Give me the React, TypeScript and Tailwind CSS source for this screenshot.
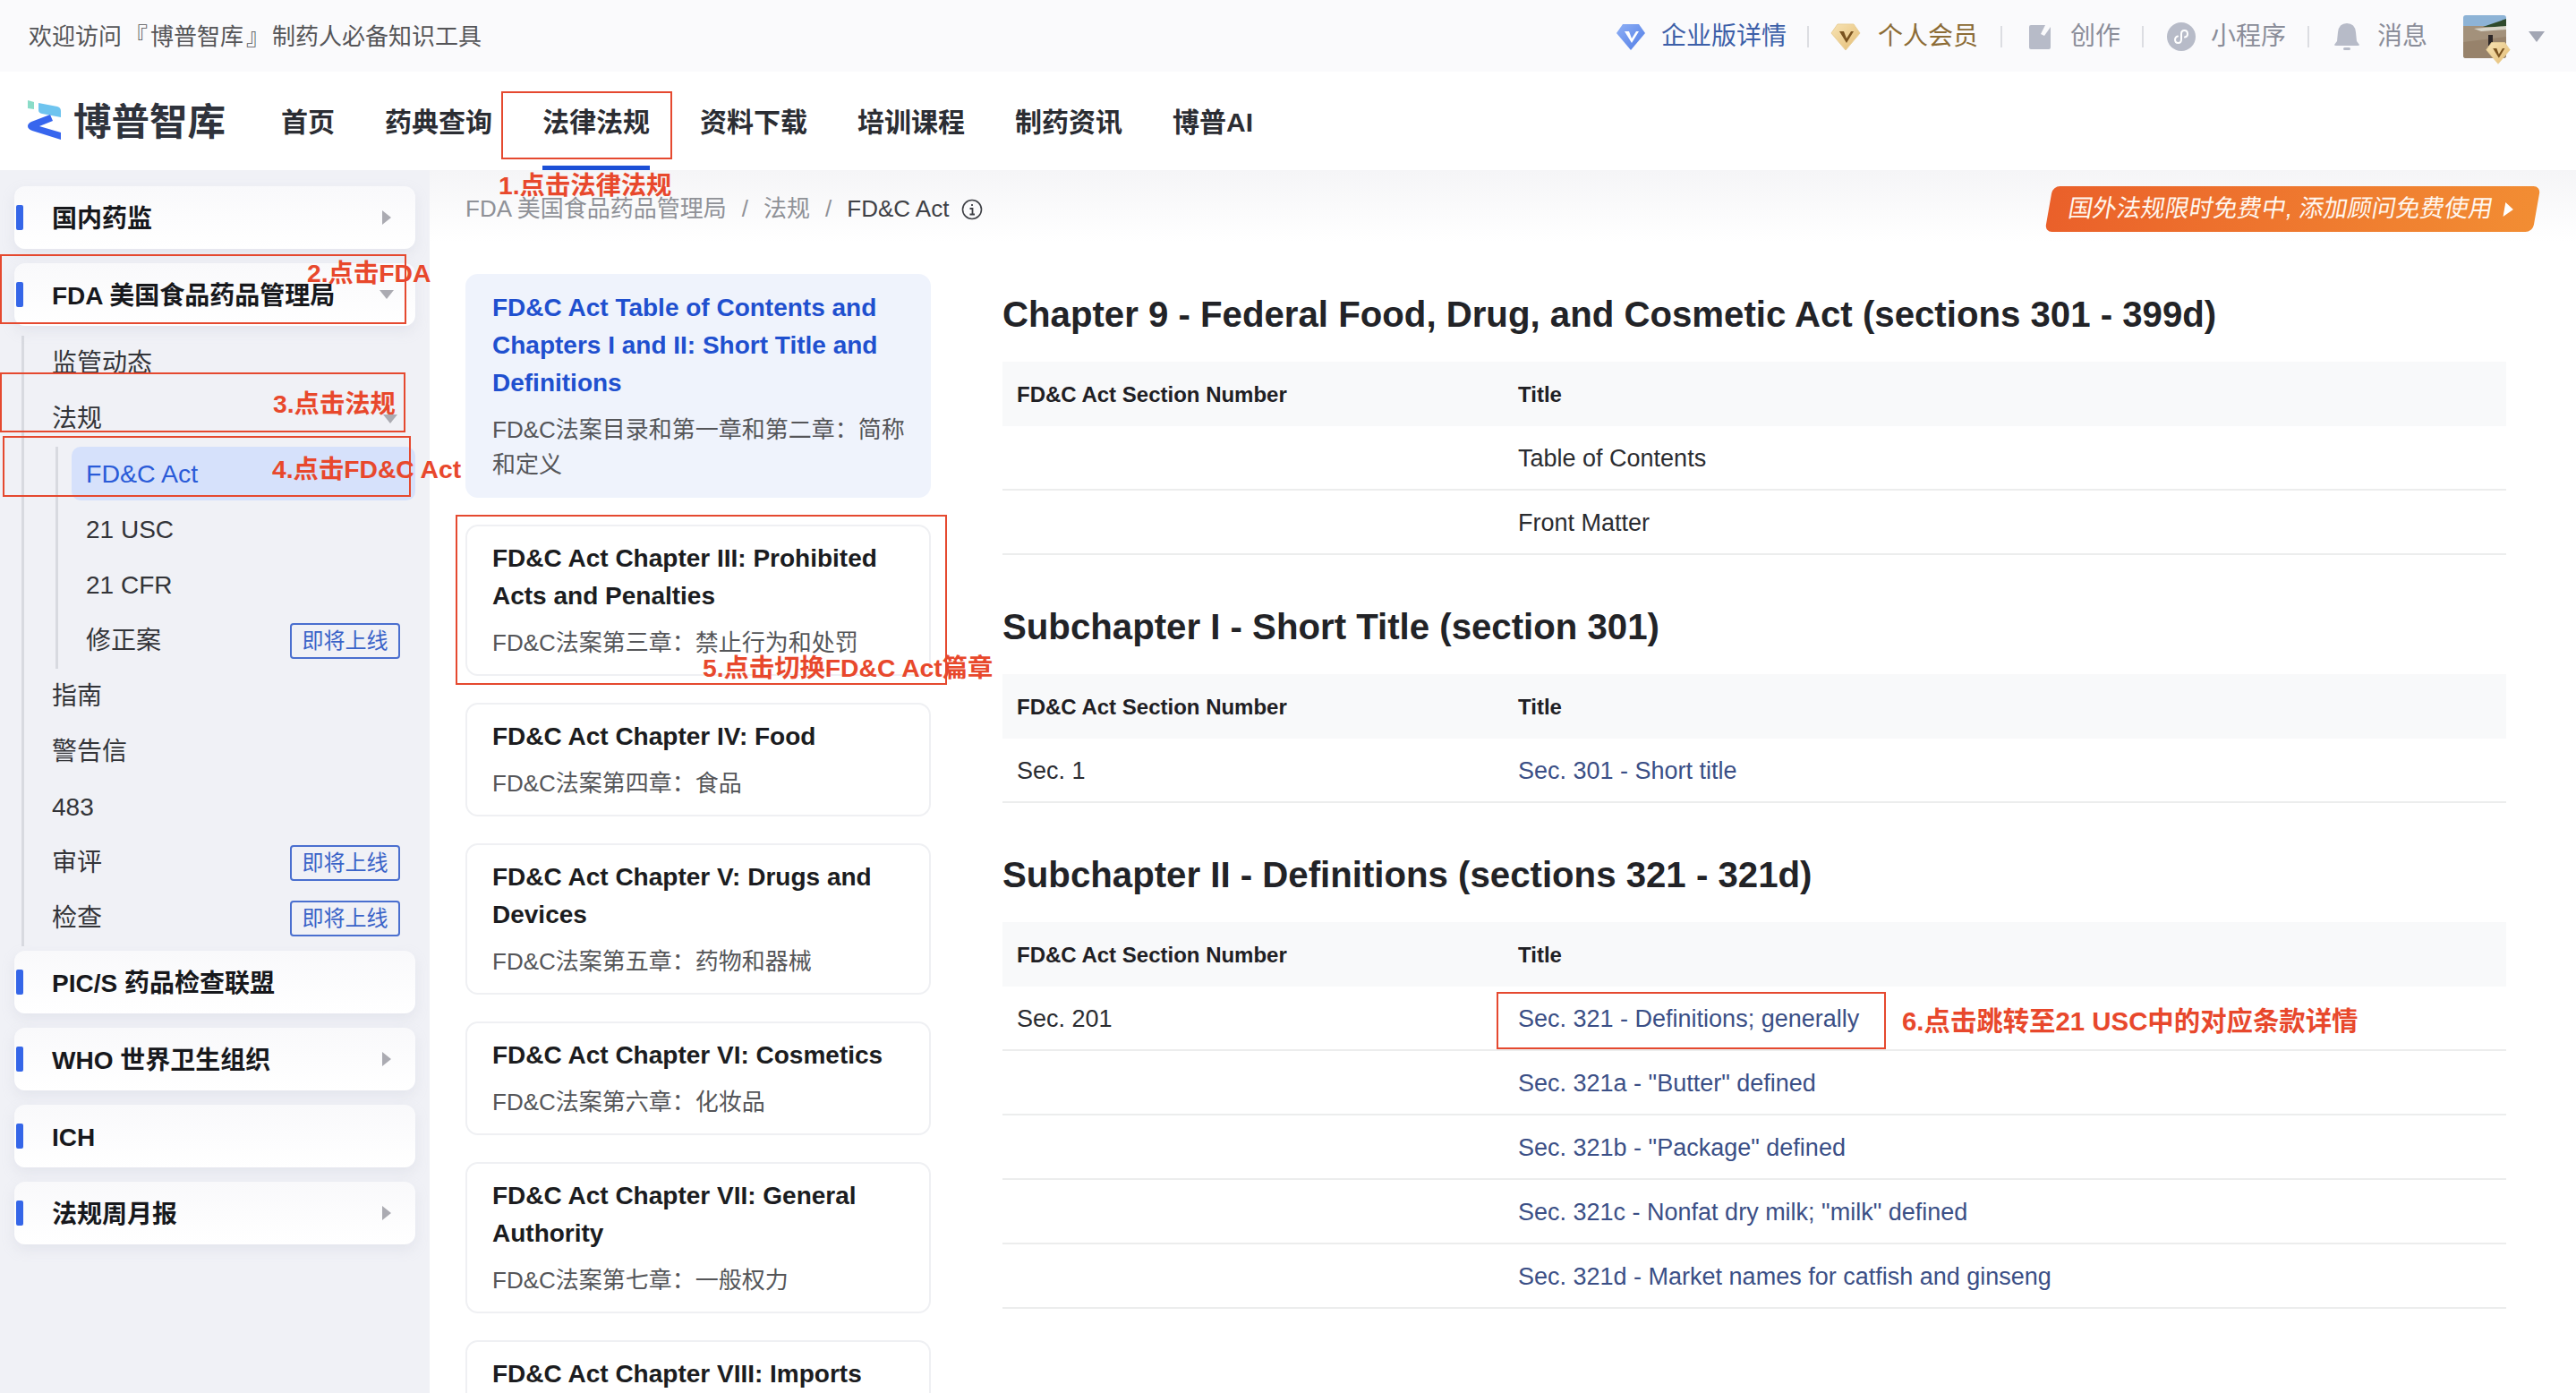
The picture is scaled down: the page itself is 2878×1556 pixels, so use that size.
import React from 'react';

function Arrow({ down = false, className = '' }: { down?: boolean; className?: string }) {
    return (
        <svg width="12" height="18" viewBox="0 0 12 18" className={className} style={down ? { transform: 'rotate(90deg)' } : undefined}>
            <path d="M1 1 L11 9 L1 17 Z" fill="#ababb2" />
        </svg>
    );
}

function Gem({ blue = false, size = 34 }: { blue?: boolean; size?: number }) {
    const id = blue ? 'gemBlue' : 'gemGold';
    return (
        <svg width={size} height={size} viewBox="0 0 34 34">
            <defs>
                <linearGradient id={id} x1="0" y1="0" x2="1" y2="1">
                    <stop offset="0" stopColor={blue ? '#8fb0f5' : '#f7e3b4'} />
                    <stop offset="1" stopColor={blue ? '#4f7be6' : '#e4bc74'} />
                </linearGradient>
            </defs>
            <path d="M8 3 H26 L33 13 L17 32 L1 13 Z" fill={`url(#${id})`} stroke={blue ? 'none' : '#e9cf97'} strokeLinejoin="round" />
            <path d="M10 11 H15 L18 19 L23 11 H26 L18 24 Z" fill={blue ? '#ffffff' : '#7a5320'} />
        </svg>
    );
}

function Sep() {
    return <span className="w-[2px] h-[24px] bg-[#dcdde2]" />;
}

function Logo() {
    return (
        <svg width="40" height="48" viewBox="10 12 40 48">
            <path d="M11 13 L18 15 L18 23 L11 22 Z" fill="#8adcc8" />
            <path d="M23 16 L44 20 Q48 21 48 25 L48 32 L27 28 Q23 27 23 24 Z" fill="#6ec4ef" />
            <path d="M36 29 L39 36 L24 42 L48 49 L48 57 L16 47 Q11 45 11 42 Q11 39 15 37 Z" fill="#3766ee" />
        </svg>
    );
}

function Avatar() {
    return (
        <div className="relative w-[48px] h-[48px]">
            <svg width="48" height="48" viewBox="0 0 48 48" className="rounded-[3px]">
                <rect width="48" height="14" fill="#8db3d6" />
                <rect y="12" width="48" height="36" fill="#a3917b" />
                <path d="M22 13 L48 4 L48 13 Z" fill="#2f4a2c" />
                <path d="M12 15 L48 12 L48 16 L20 18 Z" fill="#d8d5c9" />
                <path d="M0 30 L48 24 L48 48 L0 48 Z" fill="#97826b" />
                <rect x="28" y="22" width="5" height="12" fill="#2c2626" />
            </svg>
            <div className="absolute left-[25px] top-[28px]">
                <Gem size={28} />
            </div>
        </div>
    );
}

function TopBar() {
    return (
        <div className="h-[80px] pt-[2px] bg-[#fafafc] flex items-center justify-between pl-[32px] pr-[35px]">
            <span className="text-[26px] text-[#555558]">
                欢迎访问<span className="mx-[3px]">『</span>博普智库<span className="mx-[3px]">』</span>制药人必备知识工具
            </span>
            <div className="flex items-center text-[28px] text-[#8a8d99]">
                <Gem blue />
                <span className="ml-[17px] mr-[23px] text-[#3d5fa8]">企业版详情</span>
                <Sep />
                <span className="ml-[24px]"><Gem /></span>
                <span className="ml-[19px] mr-[25px] text-[#8c6c36]">个人会员</span>
                <Sep />
                <svg width="28" height="30" viewBox="0 0 28 30" className="ml-[29px]">
                    <path d="M3 2 H19 L14 12 L18 14 L25 4 V27 Q25 29 23 29 H3 Q1 29 1 27 V4 Q1 2 3 2 Z" fill="#b7bbc8" />
                </svg>
                <span className="ml-[19px] mr-[24px]">创作</span>
                <Sep />
                <svg width="32" height="32" viewBox="0 0 32 32" className="ml-[26px]">
                    <circle cx="16" cy="16" r="16" fill="#b7bbc8" />
                    <path d="M9 19 Q9 23 12.5 23 Q16 23 16 19 V13 Q16 9 19.5 9 Q23 9 23 13 Q23 16 20 16.5 M12 15.5 Q9.500 16 9 19" fill="none" stroke="#ffffff" strokeWidth="2" strokeLinecap="round" />
                </svg>
                <span className="ml-[17px] mr-[24px]">小程序</span>
                <Sep />
                <svg width="30" height="32" viewBox="0 0 30 32" className="ml-[27px]">
                    <path d="M15 1 Q24 1 25 11 L26 21 L29 25 Q29 26 27 26 H3 Q1 26 1 25 L4 21 L5 11 Q6 1 15 1 Z" fill="#b7bbc8" />
                    <rect x="11" y="28" width="8" height="3" rx="1.500" fill="#b7bbc8" />
                </svg>
                <span className="ml-[19px]">消息</span>
                <span className="ml-[40px]"><Avatar /></span>
                <svg width="18" height="12" viewBox="0 0 18 12" className="ml-[25px]">
                    <path d="M0 0 H18 L9 12 Z" fill="#a2a6b4" />
                </svg>
            </div>
        </div>
    );
}

function NavBar() {
    const items = ['首页', '药典查询', '法律法规', '资料下载', '培训课程', '制药资讯', '博普AI'];
    return (
        <div className="h-[110px] bg-white flex items-stretch pl-[30px]">
            <div className="flex items-center w-[284px] shrink-0">
                <Logo />
                <span className="ml-[12px] pt-[4px] text-[42.5px] font-semibold text-[#2f333c]">博普智库</span>
            </div>
            <nav className="flex gap-[56px] text-[30px] font-semibold text-[#2b2d33]">
                {items.map((item) => (
                    <span key={item} className="relative flex items-center pt-[3px]">
                        {item}
                        {item === '法律法规' && <span className="absolute left-0 right-0 bottom-0 h-[5px] bg-[#1c4fd6]" />}
                    </span>
                ))}
            </nav>
        </div>
    );
}

function SideCard({ label, arrow }: { label: string; arrow?: 'right' | 'down' }) {
    return (
        <div className="h-[70px] mx-[16px] rounded-[12px] bg-gradient-to-b from-[#f9f9fb] to-white shadow-[0_6px_14px_rgba(190,195,210,0.25)] flex items-center relative pl-[42px] pr-[26px] justify-between">
            <span className="absolute left-[2px] top-[21px] w-[8px] h-[28px] rounded-[2px] bg-[#3566e8]" />
            <span className="pt-[3px] text-[28px] font-semibold text-[#17181c]">{label}</span>
            {arrow && <Arrow down={arrow === 'down'} />}
        </div>
    );
}

function Soon() {
    return (
        <span className="w-[123px] h-[40px] border-2 border-[#4a6fcf] rounded-[4px] text-[24px] text-[#3a63c8] flex items-center justify-center">
            即将上线
        </span>
    );
}

function SideRow({ label, soon, children }: { label: string; soon?: boolean; children?: React.ReactNode }) {
    return (
        <div className="h-[62px] flex items-center justify-between pr-[33px] text-[28px] text-[#333438]">
            <span>{label}</span>
            {soon && <Soon />}
            {children}
        </div>
    );
}

function Sidebar() {
    return (
        <aside className="w-[480px] shrink-0 bg-[#f0f1f6] pt-[18px] flex flex-col">
            <SideCard label="国内药监" arrow="right" />
            <div className="mt-[16px]">
                <SideCard label="FDA 美国食品药品管理局" arrow="down" />
            </div>
            <div className="mt-[11px] ml-[24px] border-l-[3px] border-[#d8dae0] pl-[31px]">
                <SideRow label="监管动态" />
                <SideRow label="法规">
                    <Arrow down className="mr-[5px]" />
                </SideRow>
                <div className="ml-[4px] border-l-[3px] border-[#d8dae0] pl-[15px]">
                    <div className="h-[60px] mr-[16px] mb-[2px] rounded-[10px] bg-[#d6e1fb] flex items-center pl-[16px] text-[28.5px] text-[#2a5bd8]">
                        FD&amp;C Act
                    </div>
                    <div className="pl-[16px]">
                        <SideRow label="21 USC" />
                        <SideRow label="21 CFR" />
                        <SideRow label="修正案" soon />
                    </div>
                </div>
                <SideRow label="指南" />
                <SideRow label="警告信" />
                <SideRow label="483" />
                <SideRow label="审评" soon />
                <SideRow label="检查" soon />
            </div>
            <div className="mt-[5px] flex flex-col gap-[16px]">
                <SideCard label="PIC/S 药品检查联盟" />
                <SideCard label="WHO 世界卫生组织" arrow="right" />
                <SideCard label="ICH" />
                <SideCard label="法规周月报" arrow="right" />
            </div>
        </aside>
    );
}

function Breadcrumb() {
    return (
        <div className="h-[80px] pt-[7px] bg-gradient-to-b from-[#f5f5f7] to-white flex items-center justify-between pl-[40px] pr-[44px]">
            <div className="flex items-center text-[26px] text-[#8f9197]">
                <span>FDA 美国食品药品管理局</span>
                <span className="mx-[17px]">/</span>
                <span>法规</span>
                <span className="mx-[17px]">/</span>
                <span className="text-[#3f4146]">FD&amp;C Act</span>
                <svg width="24" height="24" viewBox="0 0 24 24" className="ml-[14px]">
                    <circle cx="12" cy="12" r="10.500" fill="none" stroke="#3f4146" strokeWidth="1.600" />
                    <path d="M12 6 v2 M9.500 11 H12.500 V17.500 M9.500 17.500 H15" fill="none" stroke="#3f4146" strokeWidth="1.800" />
                </svg>
            </div>
            <div className="-skew-x-[10deg] w-[545px] h-[51px] rounded-[8px] bg-gradient-to-r from-[#ea602a] to-[#f28d33] flex items-center pl-[22px] text-[27px] text-[#fff6ee] whitespace-nowrap">
                <span>国外法规限时免费中, 添加顾问免费使用</span>
                <svg width="12" height="18" viewBox="0 0 12 18" className="ml-[12px]">
                    <path d="M1 1 L11 9 L1 17 Z" fill="#ffffff" />
                </svg>
            </div>
        </div>
    );
}

const chapters: { en: string[]; zh: string[]; active?: boolean }[] = [
    { en: ['FD&C Act Table of Contents and', 'Chapters I and II: Short Title and', 'Definitions'], zh: ['FD&C法案目录和第一章和第二章：简称', '和定义'], active: true },
    { en: ['FD&C Act Chapter III: Prohibited', 'Acts and Penalties'], zh: ['FD&C法案第三章：禁止行为和处罚'] },
    { en: ['FD&C Act Chapter IV: Food'], zh: ['FD&C法案第四章：食品'] },
    { en: ['FD&C Act Chapter V: Drugs and', 'Devices'], zh: ['FD&C法案第五章：药物和器械'] },
    { en: ['FD&C Act Chapter VI: Cosmetics'], zh: ['FD&C法案第六章：化妆品'] },
    { en: ['FD&C Act Chapter VII: General', 'Authority'], zh: ['FD&C法案第七章：一般权力'] },
    { en: ['FD&C Act Chapter VIII: Imports'], zh: [] },
];

function ChapterList() {
    return (
        <div className="w-[520px] ml-[40px] shrink-0 flex flex-col gap-[30px] pt-[36px]">
            {chapters.map((c) => (
                <div
                    key={c.en[0]}
                    className={`rounded-[14px] px-[28px] py-[15px] border-2 shrink-0 whitespace-nowrap ${c.active ? 'bg-[#eff3fc] border-[#eff3fc]' : 'bg-white border-[#eff0f3]'}`}
                >
                    <div className={`text-[28px] font-bold leading-[42px] ${c.active ? 'text-[#1f50cf]' : 'text-[#1b1c20]'}`}>
                        {c.en.map((line) => <div key={line}>{line}</div>)}
                    </div>
                    <div className="mt-[12px] text-[26px] leading-[39px] text-[#555659]">
                        {c.zh.map((line) => <div key={line}>{line}</div>)}
                    </div>
                </div>
            ))}
        </div>
    );
}

function Section({ title, rows }: { title: string; rows: [string, string, boolean][] }) {
    return (
        <section>
            <h2 className="h-[58px] leading-[58px] text-[40.2px] font-bold text-[#222327] whitespace-nowrap">{title}</h2>
            <div className="mt-[23px] text-[27px]">
                <div className="h-[72px] pt-[2px] bg-[#f8f9fa] flex items-center px-[16px] text-[24px] font-bold text-[#1f2024]">
                    <span className="w-[560px]">FD&amp;C Act Section Number</span>
                    <span>Title</span>
                </div>
                {rows.map(([num, name, link]) => (
                    <div key={name} className="h-[72px] pt-[2px] border-b-2 border-[#eceded] flex items-center px-[16px] text-[#2b2c30]">
                        <span className="w-[560px]">{num}</span>
                        <span className={link ? 'text-[#3b4f86]' : ''}>{name}</span>
                    </div>
                ))}
            </div>
        </section>
    );
}

function Tables() {
    return (
        <div className="ml-[80px] w-[1680px] shrink-0 pt-[53px] flex flex-col gap-[52px]">
            <Section
                title="Chapter 9 - Federal Food, Drug, and Cosmetic Act (sections 301 - 399d)"
                rows={[['', 'Table of Contents', false], ['', 'Front Matter', false]]}
            />
            <Section title="Subchapter I - Short Title (section 301)" rows={[['Sec. 1', 'Sec. 301 - Short title', true]]} />
            <Section
                title="Subchapter II - Definitions (sections 321 - 321d)"
                rows={[
                    ['Sec. 201', 'Sec. 321 - Definitions; generally', true],
                    ['', 'Sec. 321a - "Butter" defined', true],
                    ['', 'Sec. 321b - "Package" defined', true],
                    ['', 'Sec. 321c - Nonfat dry milk; "milk" defined', true],
                    ['', 'Sec. 321d - Market names for catfish and ginseng', true],
                ]}
            />
        </div>
    );
}

// red tutorial marks sit over the page
function Marks() {
    const label = 'absolute text-[28.3px] leading-[34px] font-bold text-[#e8482c] whitespace-nowrap';
    const box = 'absolute border-2 border-[#e5492f]';
    return (
        <div className="absolute inset-0 pointer-events-none">
            <div className={`${box} left-[560px] top-[102px] w-[191px] h-[76px]`} />
            <div className={`${label} left-[557px] top-[190px]`}>1.点击法律法规</div>
            <div className={`${box} left-0 top-[284px] w-[454px] h-[78px]`} />
            <div className={`${label} left-[343px] top-[288px]`}>2.点击FDA</div>
            <div className={`${box} left-0 top-[416px] w-[453px] h-[67px]`} />
            <div className={`${label} left-[305px] top-[434px]`}>3.点击法规</div>
            <div className={`${box} left-[3px] top-[487px] w-[456px] h-[68px]`} />
            <div className={`${label} left-[304px] top-[507px]`}>4.点击FD&amp;C Act</div>
            <div className={`${box} left-[509px] top-[575px] w-[549px] h-[190px]`} />
            <div className={`${label} left-[785px] top-[729px]`}>5.点击切换FD&amp;C Act篇章</div>
            <div className={`${box} left-[1672px] top-[1108px] w-[435px] h-[64px]`} />
            <div className={`${label} text-[29.400px] left-[2125px] top-[1124px]`}>6.点击跳转至21 USC中的对应条款详情</div>
        </div>
    );
}

export default function App() {
    return (
        <div className="relative w-[2878px] h-[1556px] overflow-hidden bg-white [font-family:'Liberation_Sans','Noto_Sans_CJK_SC',sans-serif]">
            <TopBar />
            <NavBar />
            <div className="flex h-[1366px] overflow-hidden">
                <Sidebar />
                <main className="flex-1 min-w-0 overflow-hidden">
                    <Breadcrumb />
                    <div className="flex">
                        <ChapterList />
                        <Tables />
                    </div>
                </main>
            </div>
            <Marks />
        </div>
    );
}
